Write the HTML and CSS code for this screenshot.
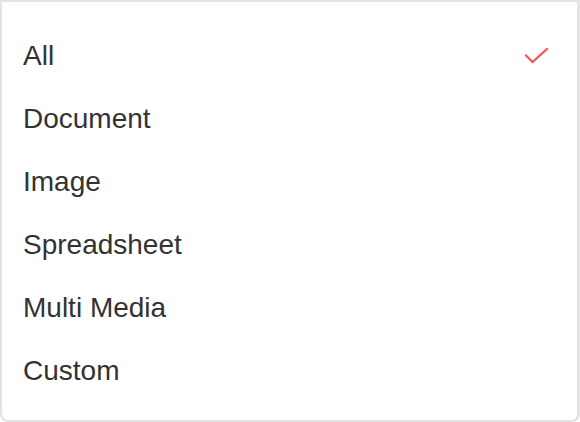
FILE: index.html
```html
<!DOCTYPE html>
<html>
<head>
<meta charset="utf-8">
<link rel="stylesheet" href="styles.css">
</head>
<body>
<div class="panel">
  <ul class="list">
    <li class="item selected"><span>All</span>
      <svg class="check" width="24" height="16" viewBox="0 0 24 16"><path d="M1 7.5 L7.5 14 L22 1" fill="none" stroke="#ef5757" stroke-width="2.2" stroke-linecap="square"/></svg>
    </li>
    <li class="item"><span>Document</span></li>
    <li class="item"><span>Image</span></li>
    <li class="item"><span>Spreadsheet</span></li>
    <li class="item"><span>Multi Media</span></li>
    <li class="item"><span>Custom</span></li>
  </ul>
</div>
</body>
</html>
```
FILE: styles.css
```css
html, body {
  margin: 0;
  padding: 0;
  background: #ffffff;
}
.panel {
  box-sizing: border-box;
  width: 580px;
  height: 422px;
  border: 2px solid #e3e3e3;
  border-right-width: 3px;
  border-radius: 0 0 8px 8px;
  background: #ffffff;
  padding-top: 22px;
}
.list {
  list-style: none;
  margin: 0;
  padding: 0;
}
.item {
  height: 63px;
  display: flex;
  align-items: center;
  justify-content: space-between;
  padding: 0 28px 0 21px;
  font-family: "Liberation Sans", Arial, sans-serif;
  font-size: 28px;
  color: #333333;
}
.check {
  display: block;
  margin-top: 1px;
}
```
